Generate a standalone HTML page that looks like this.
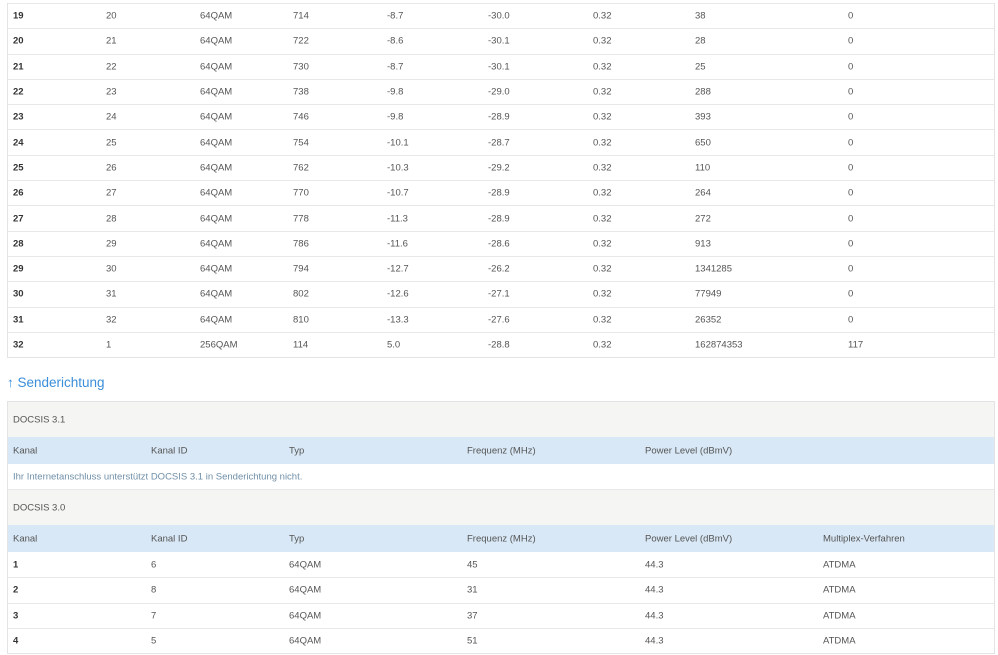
<!DOCTYPE html>
<html><head><meta charset="utf-8"><style>
*{margin:0;padding:0;box-sizing:border-box}
body{width:998px;height:655px;overflow:hidden;background:#fff;font-family:"Liberation Sans",sans-serif;font-size:9.5px;color:#555;position:relative}
.t{position:absolute;left:7px;width:988px;border:1px solid #e3e3e3;border-top:none}
.r{position:relative;height:25.3px;border-top:1px solid #e8e8e8}
.r span{position:absolute;top:50%;transform:translateY(-50%);white-space:nowrap}
.r b{position:absolute;top:50%;transform:translateY(-50%);color:#333}
.g{background:#f5f5f3}
.h{background:#d8e8f6;border-top:none}
.a span:nth-child(1),.a b{left:5px}.a span:nth-child(2){left:98px}.a span:nth-child(3){left:192px}.a span:nth-child(4){left:285px}.a span:nth-child(5){left:379px}.a span:nth-child(6){left:480px}.a span:nth-child(7){left:585px}.a span:nth-child(8){left:687px}.a span:nth-child(9){left:840px}
.c b,.c span:nth-child(1){left:5px}.c span:nth-child(2){left:143px}.c span:nth-child(3){left:281px}.c span:nth-child(4){left:459px}.c span:nth-child(5){left:637px}.c span:nth-child(6){left:815px}
h2{position:absolute;left:7px;top:375px;font-weight:normal;font-size:13.5px;color:#3b8ed9}
</style></head><body>
<div class="t" style="top:3px">
<div class="r a"><b>19</b><span>20</span><span>64QAM</span><span>714</span><span>-8.7</span><span>-30.0</span><span>0.32</span><span>38</span><span>0</span></div>
<div class="r a"><b>20</b><span>21</span><span>64QAM</span><span>722</span><span>-8.6</span><span>-30.1</span><span>0.32</span><span>28</span><span>0</span></div>
<div class="r a"><b>21</b><span>22</span><span>64QAM</span><span>730</span><span>-8.7</span><span>-30.1</span><span>0.32</span><span>25</span><span>0</span></div>
<div class="r a"><b>22</b><span>23</span><span>64QAM</span><span>738</span><span>-9.8</span><span>-29.0</span><span>0.32</span><span>288</span><span>0</span></div>
<div class="r a"><b>23</b><span>24</span><span>64QAM</span><span>746</span><span>-9.8</span><span>-28.9</span><span>0.32</span><span>393</span><span>0</span></div>
<div class="r a"><b>24</b><span>25</span><span>64QAM</span><span>754</span><span>-10.1</span><span>-28.7</span><span>0.32</span><span>650</span><span>0</span></div>
<div class="r a"><b>25</b><span>26</span><span>64QAM</span><span>762</span><span>-10.3</span><span>-29.2</span><span>0.32</span><span>110</span><span>0</span></div>
<div class="r a"><b>26</b><span>27</span><span>64QAM</span><span>770</span><span>-10.7</span><span>-28.9</span><span>0.32</span><span>264</span><span>0</span></div>
<div class="r a"><b>27</b><span>28</span><span>64QAM</span><span>778</span><span>-11.3</span><span>-28.9</span><span>0.32</span><span>272</span><span>0</span></div>
<div class="r a"><b>28</b><span>29</span><span>64QAM</span><span>786</span><span>-11.6</span><span>-28.6</span><span>0.32</span><span>913</span><span>0</span></div>
<div class="r a"><b>29</b><span>30</span><span>64QAM</span><span>794</span><span>-12.7</span><span>-26.2</span><span>0.32</span><span>1341285</span><span>0</span></div>
<div class="r a"><b>30</b><span>31</span><span>64QAM</span><span>802</span><span>-12.6</span><span>-27.1</span><span>0.32</span><span>77949</span><span>0</span></div>
<div class="r a"><b>31</b><span>32</span><span>64QAM</span><span>810</span><span>-13.3</span><span>-27.6</span><span>0.32</span><span>26352</span><span>0</span></div>
<div class="r a"><b>32</b><span>1</span><span>256QAM</span><span>114</span><span>5.0</span><span>-28.8</span><span>0.32</span><span>162874353</span><span>117</span></div>
</div>
<h2>↑ Senderichtung</h2>
<div class="t" style="top:401px;border-top:1px solid #e3e3e3">
<div class="r g c" style="height:35px;border-top:none"><span>DOCSIS 3.1</span></div>
<div class="r h c" style="height:27px"><span>Kanal</span><span>Kanal ID</span><span>Typ</span><span>Frequenz (MHz)</span><span>Power Level (dBmV)</span></div>
<div class="r c" style="height:25px;border-top:none"><span style="color:#6f8fa8">Ihr Internetanschluss unterstützt DOCSIS 3.1 in Senderichtung nicht.</span></div>
<div class="r g c" style="height:36px"><span>DOCSIS 3.0</span></div>
<div class="r h c" style="height:27px"><span>Kanal</span><span>Kanal ID</span><span>Typ</span><span>Frequenz (MHz)</span><span>Power Level (dBmV)</span><span>Multiplex-Verfahren</span></div>
<div class="r c" style="border-top:none"><b>1</b><span>6</span><span>64QAM</span><span>45</span><span>44.3</span><span>ATDMA</span></div>
<div class="r c"><b>2</b><span>8</span><span>64QAM</span><span>31</span><span>44.3</span><span>ATDMA</span></div>
<div class="r c"><b>3</b><span>7</span><span>64QAM</span><span>37</span><span>44.3</span><span>ATDMA</span></div>
<div class="r c"><b>4</b><span>5</span><span>64QAM</span><span>51</span><span>44.3</span><span>ATDMA</span></div>
</div>
</body></html>
